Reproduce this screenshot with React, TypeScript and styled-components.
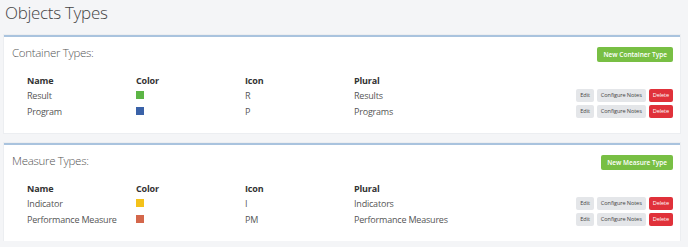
import React from "react";
import styled, { createGlobalStyle } from "styled-components";

const GlobalStyle = createGlobalStyle`
  body {
    margin: 0;
    background: #f4f5f7;
    font-family: "Open Sans", "Noto Sans", sans-serif;
    color: #555;
  }
`;

type Row = { name: string; color: string; icon: string; plural: string };

const containerTypes: Row[] = [
  { name: "Result", color: "#5cb545", icon: "R", plural: "Results" },
  { name: "Program", color: "#3a62a8", icon: "P", plural: "Programs" },
];

const measureTypes: Row[] = [
  { name: "Indicator", color: "#f4c21a", icon: "I", plural: "Indicators" },
  { name: "Performance Measure", color: "#d4674b", icon: "PM", plural: "Performance Measures" },
];

const Section = ({ title, button, rows }: { title: string; button: string; rows: Row[] }) => (
  <Card>
    <CardHead>
      <CardTitle>{title}</CardTitle>
      <NewButton>{button}</NewButton>
    </CardHead>
    <Table>
      <HeadCell>Name</HeadCell>
      <HeadCell>Color</HeadCell>
      <HeadCell>Icon</HeadCell>
      <HeadCell>Plural</HeadCell>
      <HeadCell />
      {rows.map((r) => (
        <React.Fragment key={r.name}>
          <Cell>{r.name}</Cell>
          <Cell>
            <Swatch $color={r.color} />
          </Cell>
          <Cell>{r.icon}</Cell>
          <Cell>{r.plural}</Cell>
          <Actions>
            <SmallButton>Edit</SmallButton>
            <SmallButton>Configure Notes</SmallButton>
            <SmallButton $danger>Delete</SmallButton>
          </Actions>
        </React.Fragment>
      ))}
    </Table>
  </Card>
);

export default function App() {
  return (
    <>
      <GlobalStyle />
      <Page>
        <PageTitle>Objects Types</PageTitle>
        <Section title="Container Types:" button="New Container Type" rows={containerTypes} />
        <Section title="Measure Types:" button="New Measure Type" rows={measureTypes} />
      </Page>
    </>
  );
}

const Page = styled.div`
  padding: 1px 8px 0 4px;
  display: flex;
  flex-direction: column;
  gap: 10px;
`;

const PageTitle = styled.h1`
  margin: 0 0 0 1px;
  font-size: 17px;
  font-weight: 300;
  line-height: 24px;
  letter-spacing: -0.3px;
  color: #444;
`;

const Card = styled.div`
  background: #fff;
  border-top: 2px solid #a9c3de;
  box-shadow: 0 0 0 1px #eceef1;
  padding: 10px 7px 14px 8px;
`;

const CardHead = styled.div`
  display: flex;
  justify-content: space-between;
  align-items: center;
  height: 15px;
`;

const CardTitle = styled.div`
  font-size: 11.5px;
  font-weight: 300;
  letter-spacing: -0.3px;
  color: #555;
  margin-top: -4px;
`;

const NewButton = styled.button`
  height: 15px;
  padding: 0 6px;
  border: 0;
  border-radius: 2px;
  background: #78bf44;
  color: #fff;
  font-family: inherit;
  font-size: 6.5px;
  font-weight: 600;
`;

const Table = styled.div`
  display: grid;
  grid-template-columns: 109px 109px 109px 1fr auto;
  grid-auto-rows: 16px;
  grid-template-rows: 14px;
  margin: 11px 0 0 15px;
  align-items: center;
`;

const HeadCell = styled.div`
  font-size: 9px;
  font-weight: 700;
  letter-spacing: -0.15px;
  color: #333;
`;

const Cell = styled.div`
  font-size: 9px;
  letter-spacing: -0.2px;
  color: #555;
  display: flex;
  align-items: center;
`;

const Swatch = styled.span<{ $color: string }>`
  width: 8px;
  height: 8px;
  background: ${(p) => p.$color};
`;

const Actions = styled.div`
  display: flex;
  gap: 3px;
  justify-content: flex-end;
`;

const SmallButton = styled.button<{ $danger?: boolean }>`
  height: 13px;
  padding: 0 4px;
  border: 0;
  border-radius: 2px;
  background: ${(p) => (p.$danger ? "#e0313a" : "#e4e6e9")};
  color: ${(p) => (p.$danger ? "#fff" : "#444")};
  font-family: inherit;
  font-size: 5.6px;
  letter-spacing: -0.1px;
  line-height: 13px;
`;
